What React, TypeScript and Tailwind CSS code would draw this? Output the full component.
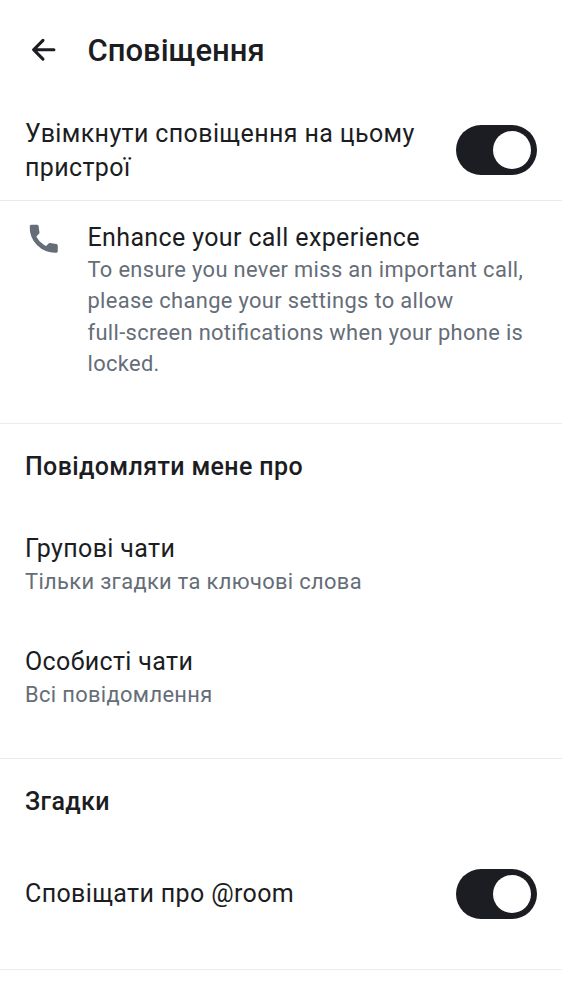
import React from 'react';

function Toggle() {
  return (
    <div role="switch" aria-checked="true" className="flex h-[50px] w-[81px] shrink-0 items-center justify-end rounded-full bg-[#1b1d22] pr-[6px]">
      <div className="size-[38px] rounded-full bg-white" />
    </div>
  );
}

function Row({ title, sub }: { title: string; sub: string }) {
  return (
    <div>
      <div className="text-[25px] leading-[34px] tracking-[0.37px]">{title}</div>
      <div className="text-[21.875px] leading-[31px] tracking-[0.35px] text-[#656d77]">{sub}</div>
    </div>
  );
}

export default function App() {
  return (
    <div className="h-[1000px] w-[562px] overflow-hidden bg-white font-['Roboto',sans-serif] text-[#1b1d22]">
      <header className="flex h-[100px] items-center pl-[25px]">
        <svg viewBox="0 0 24 24" className="size-[37.5px]" fill="currentColor">
          <path d="M12.207 5.293a1 1 0 0 1 0 1.414L7.914 11H18.5a1 1 0 1 1 0 2H7.914l4.293 4.293a1 1 0 0 1-1.414 1.414l-6-6a1 1 0 0 1 0-1.414l6-6a1 1 0 0 1 1.414 0" />
        </svg>
        <h1 className="ml-[25px] pt-px text-[31px] font-medium leading-[44px]">Сповіщення</h1>
      </header>
      <section className="flex h-[101px] items-center justify-between border-b border-[#e8eaef] px-[25px]">
        <div className="w-[400px] pt-[2px] text-[25px] leading-[34px] tracking-[0.37px]">Увімкнути сповіщення на цьому пристрої</div>
        <Toggle />
      </section>
      <section className="flex h-[223px] border-b border-[#ebedf0] pl-[25px] pt-[19px]">
        <svg viewBox="0 0 24 24" className="mr-[25px] size-[37.5px] shrink-0 text-[#656d77]" fill="currentColor">
          <path d="m20.958 16.374.039 3.527q0 .427-.33.756-.33.33-.756.33a16 16 0 0 1-6.57-1.105 16.2 16.2 0 0 1-5.563-3.663 16.1 16.1 0 0 1-3.653-5.573 16.3 16.3 0 0 1-1.115-6.56q0-.427.33-.757T4.095 3l3.528.039a1.07 1.07 0 0 1 1.085.93l.543 3.954q.039.271-.039.504a1.1 1.1 0 0 1-.271.426l-1.64 1.64q.505 1.008 1.154 1.909c.433.6 1.444 1.696 1.444 1.696s1.095 1.01 1.696 1.444q.9.65 1.909 1.153l1.64-1.64q.193-.193.426-.27t.504-.04l3.954.543q.406.059.668.359t.262.727" />
        </svg>
        <div className="w-[450px] pt-px">
          <div className="text-[25px] leading-[33px] tracking-[0.37px]">Enhance your call experience</div>
          <div className="text-[21.875px] leading-[31.25px] tracking-[0.35px] text-[#656d77] [font-feature-settings:'liga'_1]">To ensure you never miss an important call,<br />please change your settings to allow<br />full-screen notifications when your phone is<br />locked.</div>
        </div>
      </section>
      <section className="h-[335px] border-b border-[#e8eaef] px-[25px] pt-[26px]">
        <h2 className="text-[25px] font-medium leading-[34px] tracking-[0.37px]">Повідомляти мене про</h2>
        <div className="mt-[48px] flex flex-col gap-[48px]">
          <Row title="Групові чати" sub="Тільки згадки та ключові слова" />
          <Row title="Особисті чати" sub="Всі повідомлення" />
        </div>
      </section>
      <section className="h-[211px] border-b border-[#ebedf0] px-[25px] pt-[26px]">
        <h2 className="text-[25px] font-medium leading-[34px] tracking-[0.37px]">Згадки</h2>
        <div className="mt-[50px] flex items-center justify-between">
          <div className="text-[25px] leading-[34px] tracking-[0.37px]">Сповіщати про @room</div>
          <Toggle />
        </div>
      </section>
    </div>
  );
}
